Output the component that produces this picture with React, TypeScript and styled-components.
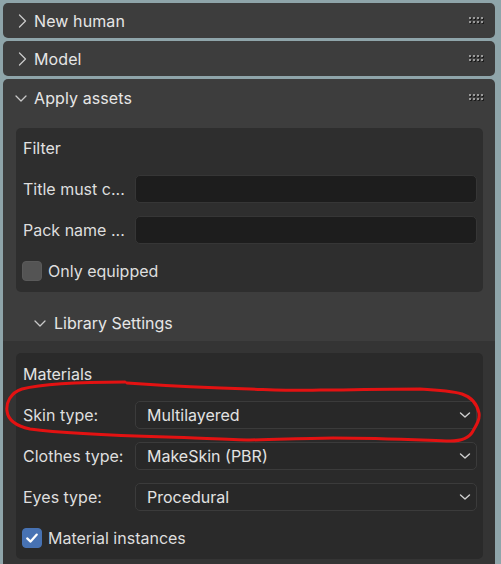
import React from "react";
import styled, { createGlobalStyle } from "styled-components";

const Global = createGlobalStyle`
  html, body { margin: 0; padding: 0; background: #8fa5aa; }
  body { font-family: Inter, "Noto Sans", "DejaVu Sans", sans-serif; }
  * { box-sizing: border-box; }
`;

const Page = styled.div`
  position: relative;
  width: 501px;
  height: 564px;
  overflow: hidden;
  background: #8fa5aa;
  padding: 3px 6px 0 3px;
  display: flex;
  flex-direction: column;
  gap: 3px;
  font-family: Inter, "Noto Sans", "DejaVu Sans", sans-serif;
  font-size: 16px;
  color: #e2e2e2;
`;

const Panel = styled.section<{ $open?: boolean }>`
  background: #3d3d3d;
  border-radius: ${(p) => (p.$open ? "5px 5px 0 0" : "5px")};
  flex: ${(p) => (p.$open ? "1 0 auto" : "0 0 auto")};
  display: flex;
  flex-direction: column;
`;

const Header = styled.div<{ $h: number }>`
  height: ${(p) => p.$h}px;
  display: flex;
  align-items: center;
  padding: 0 10px 0 12px;
  gap: 5px;
`;

const Title = styled.span`
  flex: 1;
  color: #e6e6e6;
  letter-spacing: 0.1px;
`;

const ChevronSlot = styled.svg`
  width: 14px;
  height: 14px;
  flex: 0 0 14px;
`;

const FilterWrap = styled.div`
  padding: 12px 12px 0 13px;
`;

const Box = styled.div<{ $bg: string; $pt: number }>`
  background: ${(p) => p.$bg};
  border-radius: 5px;
  padding: ${(p) => p.$pt}px 6px 7px 7px;
  display: flex;
  flex-direction: column;
  gap: 13px;
`;

const BoxTitle = styled.div`
  height: 28px;
  display: flex;
  align-items: center;
  color: #e2e2e2;
`;

const Row = styled.div`
  height: 28px;
  display: grid;
  grid-template-columns: 112px 1fr;
  align-items: center;
`;

const Label = styled.span`
  color: #dedede;
  white-space: nowrap;
`;

const TextInput = styled.div`
  height: 28px;
  background: #1d1d1d;
  border: 1px solid #363636;
  border-radius: 5px;
`;

const Dropdown = styled.div`
  height: 28px;
  background: #282828;
  border: 1px solid #3b3b3b;
  border-radius: 5px;
  display: flex;
  align-items: center;
  justify-content: space-between;
  padding: 0 4px 0 11px;
  color: #e2e2e2;
`;

const CheckRow = styled.div`
  height: 28px;
  display: flex;
  align-items: center;
  gap: 6px;
  margin-left: -1px;
`;

const CheckBox = styled.div<{ $checked?: boolean }>`
  width: 20px;
  height: 20px;
  border-radius: 4px;
  background: ${(p) => (p.$checked ? "#4772b3" : "#545454")};
  border: 1px solid ${(p) => (p.$checked ? "#4772b3" : "#5a5a5a")};
  display: flex;
  align-items: center;
  justify-content: center;
`;

const SubHeader = styled.div`
  height: 36px;
  margin-top: 13px;
  display: flex;
  align-items: center;
  padding-left: 31px;
  gap: 6px;
  color: #e6e6e6;
`;

const SubBody = styled.div`
  flex: 1;
  background: #343434;
  padding: 12px 12px 8px 13px;
`;

const Overlay = styled.svg`
  position: absolute;
  left: 0;
  top: 0;
  width: 501px;
  height: 564px;
  pointer-events: none;
`;

const ChevronRight = () => (
  <ChevronSlot viewBox="0 0 14 14">
    <path d="M4.5 1 L10.5 7 L4.5 13" fill="none" stroke="#c9c9c9" strokeWidth="1.3" strokeLinecap="round" strokeLinejoin="round" />
  </ChevronSlot>
);

const ChevronDown = ({ y = 5 }: { y?: number }) => (
  <ChevronSlot viewBox="0 0 14 14">
    <path d={`M1 ${y} L6 ${y + 5} L11 ${y}`} fill="none" stroke="#c9c9c9" strokeWidth="1.3" strokeLinecap="round" strokeLinejoin="round" />
  </ChevronSlot>
);

const Grip = () => (
  <svg width="16" height="9" viewBox="0 0 16 9">
    {[0, 4, 8, 12].map((x) =>
      [1, 5].map((y) => (
        <g key={`${x}-${y}`}>
          <rect x={x + 1} y={y + 1} width="2" height="2" fill="#1c1c1c" />
          <rect x={x} y={y} width="2" height="2" fill="#9a9a9a" />
        </g>
      ))
    )}
  </svg>
);

const SmallChevron = () => (
  <svg width="14" height="10" viewBox="0 0 14 10">
    <path d="M2.5 3 L7 7 L11.5 3" fill="none" stroke="#d0d0d0" strokeWidth="1.4" strokeLinecap="round" strokeLinejoin="round" />
  </svg>
);

const Check = () => (
  <svg width="16" height="16" viewBox="0 0 16 16">
    <path d="M3.2 8.4 L6.6 11.6 L12.8 4.6" fill="none" stroke="#ffffff" strokeWidth="2.2" strokeLinecap="round" strokeLinejoin="round" />
  </svg>
);

const materials: [string, string][] = [
  ["Skin type:", "Multilayered"],
  ["Clothes type:", "MakeSkin (PBR)"],
  ["Eyes type:", "Procedural"],
];

export default function App() {
  return (
    <>
      <Global />
      <Page>
        <Panel>
          <Header $h={35}>
            <ChevronRight />
            <Title>New human</Title>
            <Grip />
          </Header>
        </Panel>
        <Panel>
          <Header $h={35}>
            <ChevronRight />
            <Title>Model</Title>
            <Grip />
          </Header>
        </Panel>
        <Panel $open>
          <Header $h={37}>
            <ChevronDown y={5} />
            <Title>Apply assets</Title>
            <Grip />
          </Header>
          <FilterWrap>
            <Box $bg="#2e2e2e" $pt={6}>
              <BoxTitle>Filter</BoxTitle>
              <Row>
                <Label>Title must c...</Label>
                <TextInput />
              </Row>
              <Row>
                <Label>Pack name ...</Label>
                <TextInput />
              </Row>
              <CheckRow>
                <CheckBox />
                <Label>Only equipped</Label>
              </CheckRow>
            </Box>
          </FilterWrap>
          <SubHeader>
            <ChevronDown y={5} />
            <span>Library Settings</span>
          </SubHeader>
          <SubBody>
            <Box $bg="#2a2a2a" $pt={7}>
              <BoxTitle>Materials</BoxTitle>
              {materials.map(([label, value]) => (
                <Row key={label}>
                  <Label>{label}</Label>
                  <Dropdown>
                    <span>{value}</span>
                    <SmallChevron />
                  </Dropdown>
                </Row>
              ))}
              <CheckRow>
                <CheckBox $checked>
                  <Check />
                </CheckBox>
                <Label>Material instances</Label>
              </CheckRow>
            </Box>
          </SubBody>
        </Panel>
        <Overlay viewBox="0 0 501 564">
          <path
            d="M125 382 C95 382 45 383 22 389 C10 393 6 403 7 411 C8 420 16 426 30 429 C60 433 100 435 167 437 C200 438 230 440 250 440 C290 439 320 438 333 438 C380 438 420 440 450 441 C462 441 470 437 473 431 C477 424 480 419 479 413 C477 404 471 397 462 394 C452 391 440 390 420 389 C380 389 340 390 320 390 C300 391 280 390 250 389 C210 388 170 386 127 383"
            fill="none"
            stroke="#e31212"
            strokeWidth="3"
            strokeLinecap="round"
            strokeLinejoin="round"
          />
        </Overlay>
      </Page>
    </>
  );
}
